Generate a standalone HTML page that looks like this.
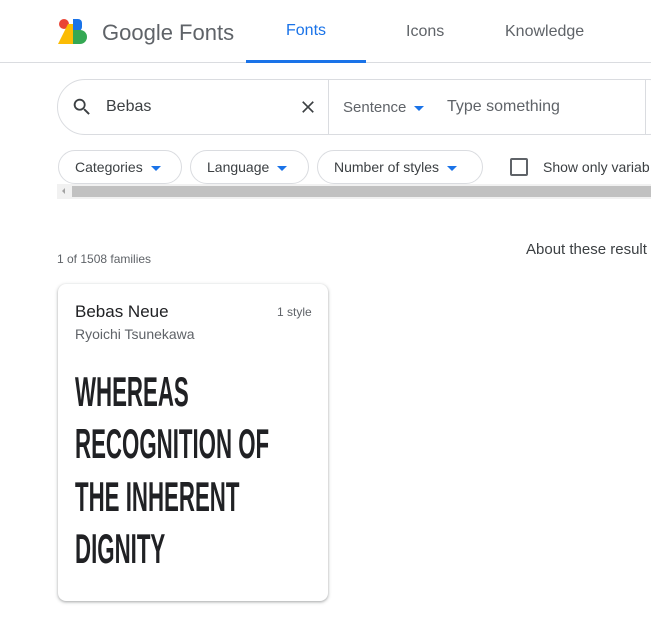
<!DOCTYPE html>
<html><head><meta charset="utf-8"><style>
*{margin:0;padding:0;box-sizing:border-box}
body{width:651px;height:635px;overflow:hidden;background:#fff;font-family:"Liberation Sans",sans-serif;color:#3c4043;position:relative}
.a{position:absolute;white-space:nowrap}
.chip{position:absolute;top:150px;height:34px;border:1px solid #dadce0;border-radius:17px;font-size:14px;color:#3c4043;line-height:32px;padding-left:16px}
.tri{display:inline-block;width:0;height:0;border-left:5px solid transparent;border-right:5px solid transparent;border-top:5px solid #1a73e8;vertical-align:middle;margin-left:8px}
.big{position:absolute;left:75px;font-weight:bold;font-size:42px;color:#202124;transform:scaleX(0.53);transform-origin:left top;white-space:nowrap}
</style></head><body>
<svg class="a" style="left:58px;top:18px" width="32" height="28" viewBox="0 0 32 28">
<circle cx="6" cy="6" r="5" fill="#ea4335"/>
<polygon points="0,26 10,6 16,6 16,26" fill="#fbbc04"/>
<rect x="15" y="1" width="9" height="12" rx="4" fill="#1a73e8"/>
<rect x="15" y="1" width="5" height="12" fill="#1a73e8"/>
<circle cx="22" cy="19" r="7" fill="#34a853"/>
<rect x="15" y="12" width="7" height="14" fill="#34a853"/>
</svg>
<div class="a" style="left:102px;top:20px;font-size:22px;color:#5f6368">Google Fonts</div>
<div class="a" style="left:286px;top:22px;font-size:16px;color:#1a73e8">Fonts</div>
<div class="a" style="left:406px;top:23px;font-size:16px;color:#5f6368">Icons</div>
<div class="a" style="left:505px;top:23px;font-size:16px;color:#5f6368">Knowledge</div>
<div class="a" style="left:0;top:62px;width:651px;height:1px;background:#dadce0"></div>
<div class="a" style="left:246px;top:60px;width:120px;height:3px;background:#1a73e8"></div>

<div class="a" style="left:57px;top:79px;width:620px;height:56px;border:1px solid #dadce0;border-radius:28px"></div>
<div class="a" style="left:328px;top:79px;width:1px;height:56px;background:#dadce0"></div>
<div class="a" style="left:645px;top:79px;width:1px;height:56px;background:#dadce0"></div>
<svg class="a" style="left:71px;top:96px" width="22" height="22" viewBox="0 0 24 24"><path d="M15.5 14h-.8l-.3-.3A6.5 6.5 0 1 0 9.5 16a6.5 6.5 0 0 0 4.2-1.6l.3.3v.8l5 5 1.5-1.5-5-5zm-6 0a4.5 4.5 0 1 1 0-9 4.5 4.5 0 0 1 0 9z" fill="#3c4043"/></svg>
<div class="a" style="left:106px;top:98px;font-size:16px;color:#3c4043">Bebas</div>
<svg class="a" style="left:298px;top:97px" width="20" height="20" viewBox="0 0 24 24"><path d="M19 6.4 17.6 5 12 10.6 6.4 5 5 6.4 10.6 12 5 17.6 6.4 19 12 13.4 17.6 19 19 17.6 13.4 12z" fill="#3c4043"/></svg>
<div class="a" style="left:343px;top:99px;font-size:15px;color:#5f6368">Sentence<span class="tri" style="margin-left:8px"></span></div>
<div class="a" style="left:447px;top:98px;font-size:16px;color:#5f6368">Type something</div>

<div class="chip" style="left:58px;width:124px">Categories<span class="tri"></span></div>
<div class="chip" style="left:190px;width:119px">Language<span class="tri"></span></div>
<div class="chip" style="left:317px;width:166px">Number of styles<span class="tri"></span></div>
<div class="a" style="left:510px;top:158px;width:18px;height:18px;border:2px solid #5f6368;border-radius:2px"></div>
<div class="a" style="left:543px;top:159px;font-size:14px;color:#3c4043">Show only variab</div>
<div class="a" style="left:57px;top:184px;width:594px;height:15px;background:#f1f1f1"></div>
<div class="a" style="left:72px;top:186px;width:579px;height:11px;background:#c1c1c1"></div>
<div class="a" style="left:62px;top:188px;width:0;height:0;border-top:3px solid transparent;border-bottom:3px solid transparent;border-right:3px solid #a3a3a3"></div>

<div class="a" style="left:57px;top:252px;font-size:12px;color:#5f6368">1 of 1508 families</div>
<div class="a" style="left:526px;top:241px;font-size:15px;color:#3c4043">About these result</div>

<div class="a" style="left:58px;top:284px;width:270px;height:317px;border-radius:8px;box-shadow:0 1px 2px rgba(60,64,67,.3),0 1px 3px 1px rgba(60,64,67,.15)"></div>
<div class="a" style="left:75px;top:302px;font-size:17px;color:#202124">Bebas Neue</div>
<div class="a" style="left:277px;top:305px;font-size:12px;color:#5f6368">1 style</div>
<div class="a" style="left:75px;top:326px;font-size:14px;color:#5f6368">Ryoichi Tsunekawa</div>
<div class="big" style="top:368px">WHEREAS</div>
<div class="big" style="top:420px">RECOGNITION OF</div>
<div class="big" style="top:473px">THE INHERENT</div>
<div class="big" style="top:525px">DIGNITY</div>
</body></html>
